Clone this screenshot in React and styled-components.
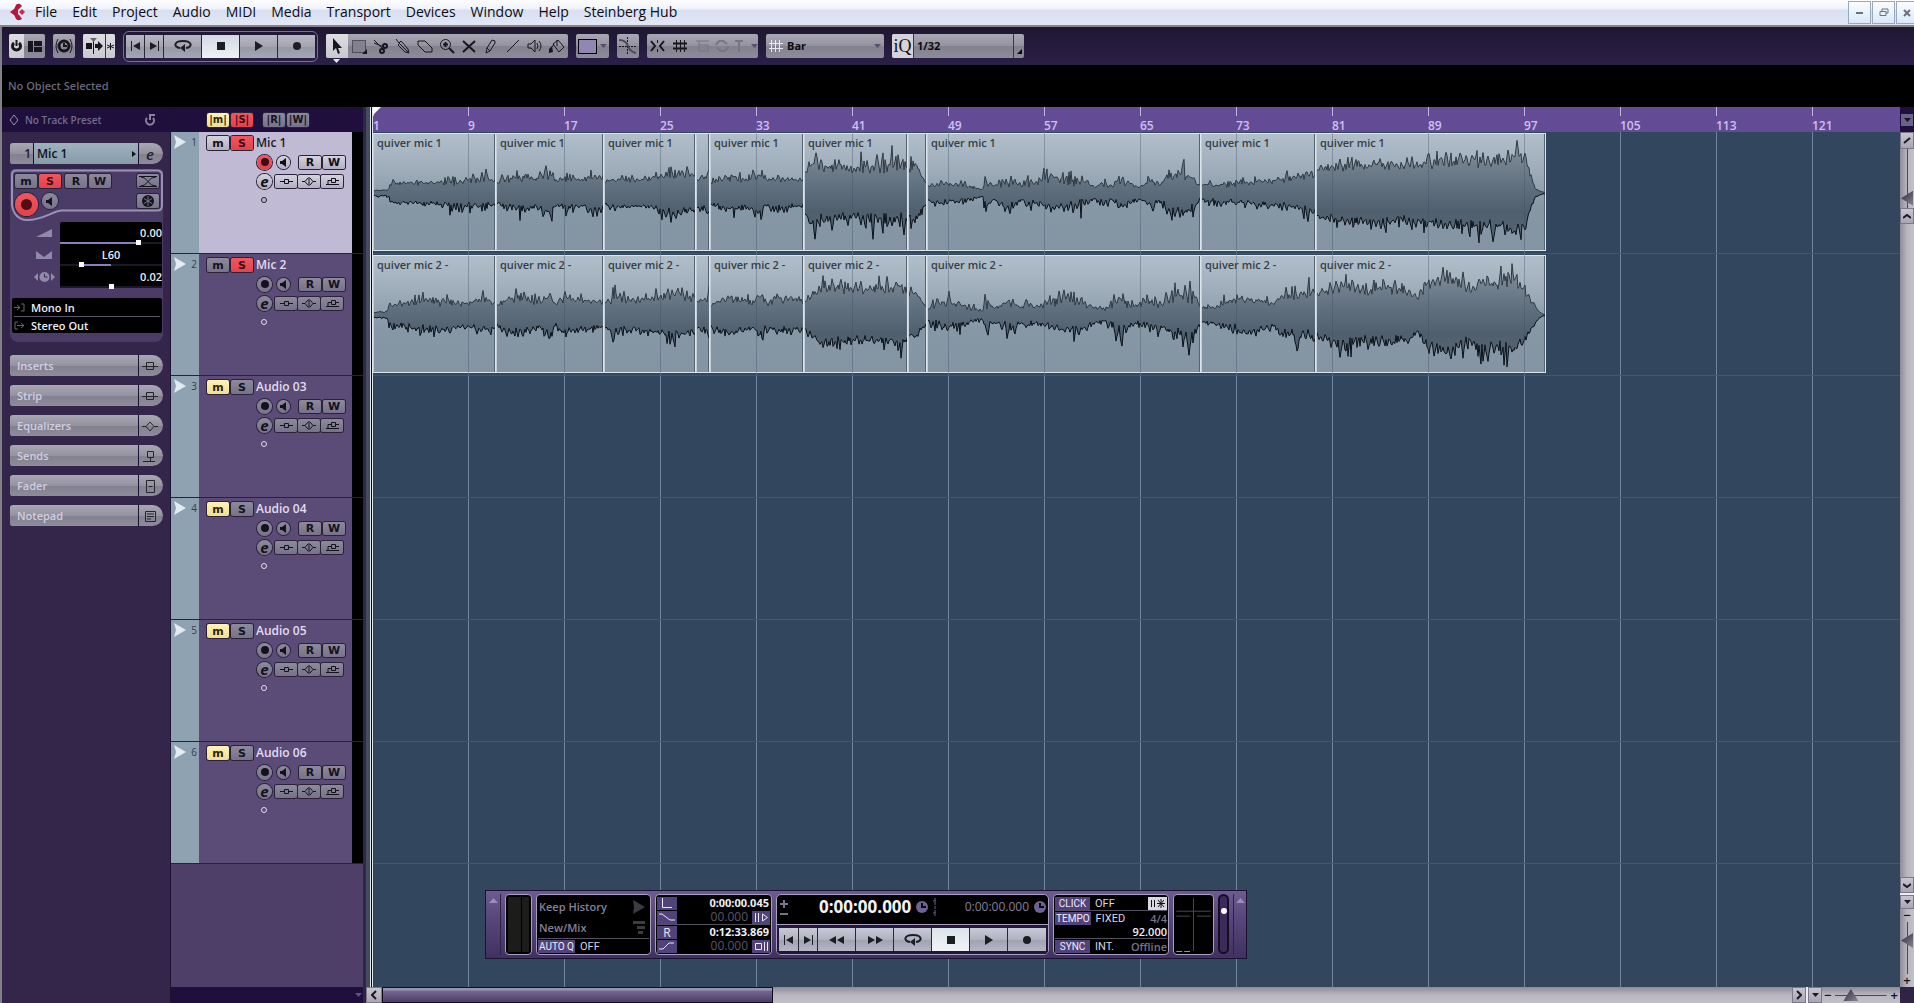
import React from 'react'
import styled, { createGlobalStyle, css } from 'styled-components'

const GlobalStyle = createGlobalStyle`
    * {
        box-sizing: border-box;
    }
    body {
        margin: 0;
        overflow: hidden;
        background: #2f2444;
        font-family: 'Open Sans', 'Noto Sans', sans-serif;
    }
    button, select, input {
        font-family: inherit;
        margin: 0;
        padding: 0;
        border: 0;
        border-radius: 0;
    }
`

/* ---------- icons ---------- */

const line = { fill: 'none', stroke: 'currentColor' }

const ICONS = {
    logo: [16, 18, <>
        <path d="M10 1C5 0 6 4 4 6L0 9l4 3c2 2 1 6 6 5l2-1-2-3-2-2V7l2-2 2-2z" fill="#b3173a" />
        <path d="m12 6 3 3-3 3-3-3z" fill="#c2304c" />
    </>],
    power: [11, 12, <>
        <path d="M3 3a4 4 0 1 0 5 0" {...line} strokeWidth="3" />
        <path d="M5.500 0v6" {...line} strokeWidth="2" />
    </>],
    layout: [14, 11, <path d="M0 0h5v11H0zM6 0h8v5H6zM6 6h8v5H6z" />],
    delay: [18, 16, <>
        <circle cx="9" cy="8" r="5" {...line} strokeWidth="3" />
        <path d="M9 5v3h3" {...line} strokeWidth="2" />
        <path d="M3 1q-4 7 0 14M15 1q4 7 0 14" {...line} strokeWidth="1" />
    </>],
    autoScroll: [17, 16, <>
        <path d="M0 5h6v6H0zM9 6h3V3l5 5-5 5v-3H9z" />
        <path d="M7.500 3v13" {...line} />
        <path d="M4 0h7L7.500 4z" fill="#666" />
    </>],
    star: [7, 7, <path d="M3.500 0v7M0 2l7 3M7 2 0 5" {...line} />],
    toStart: [11, 10, <><path d="M1.500 0v10" {...line} /><path d="M10 1v8L3 5z" /></>],
    toEnd: [11, 10, <><path d="M9.500 0v10" {...line} /><path d="M1 1v8l7-4z" /></>],
    cycle: [18, 12, <>
        <path d="M6 8C-1 7 0 1 9 1s10 6 3 7" {...line} strokeWidth="2" />
        <path d="m11 4 0 8-5-4z" />
    </>],
    stop: [10, 10, <path d="M1 1h8v8H1z" />],
    play: [10, 10, <path d="M1 0v10l8-5z" />],
    record: [10, 10, <circle cx="5" cy="5" r="4" />],
    rewind: [18, 10, <path d="M8 1v8L1 5zM16 1v8L9 5z" />],
    forward: [18, 10, <path d="M2 1v8l7-4zM10 1v8l7-4z" />],
    arrow: [10, 17, <path d="M1 0v13l3-3 2 6 2-1-2-5h4z" />],
    range: [16, 15, <>
        <path d="M1.500 1.500h13v12h-13z" fill="#83818d" stroke="currentColor" strokeDasharray="1 1" />
        <path d="M16 10v5h-5z" />
    </>],
    scissors: [16, 15, <>
        <path d="M1 1l9 9M1 4l10 4" {...line} />
        <circle cx="12" cy="7" r="2" {...line} strokeWidth="2" />
        <circle cx="9" cy="12" r="2" {...line} strokeWidth="2" />
    </>],
    glue: [16, 16, <path d="M1 1l3 4 2-2 7 8 1 4-4-1-7-7 2-2M5 6l8 8" {...line} />],
    eraser: [16, 13, <path d="M1 1h7l7 7v4H8L1 5zM1 5l7 7" {...line} />],
    zoom: [16, 16, <>
        <circle cx="6.500" cy="6.500" r="5" {...line} />
        <path d="M4 6.500h5M6.500 4v5M10 10l5 5" {...line} strokeWidth="2" />
    </>],
    mute: [14, 13, <path d="M1 1l12 11M13 1 1 12" {...line} strokeWidth="2" />],
    pencil: [12, 15, <path d="M1 14l1-5 5-8 3 1 0 2-5 8zM2 9l3 3" {...line} />],
    line: [14, 14, <path d="M1 13 13 1" {...line} />],
    speaker: [16, 14, <path d="M1 5h3l4-4v12L4 9H1zM10 4q2 3 0 6M12 2q4 5 0 10" {...line} />],
    paint: [16, 15, <><path d="M4 5l5-4 6 7-5 5zM8 7V1M5 5l-2 3" {...line} /><path d="M0 10l3-3 1 6-4 1z" /></>],
    crossfade: [20, 20, <>
        <path d="M9.500 1v18M1 10.500h18" {...line} strokeDasharray="2 1" stroke="#16161c" />
        <path d="M1 4q7 0 9 6t8 7" {...line} stroke="#4c4956" strokeWidth="2" />
    </>],
    snap: [15, 12, <>
        <path d="M1 1l4 5-4 5M14 1l-4 5 4 5" {...line} strokeWidth="2" />
        <path d="M7.500 0v3M7.500 9v3" {...line} />
    </>],
    grid: [14, 12, <path d="M2.500 0v12M6.500 0v12M10.500 0v12M0 3.500h14M0 8.500h14" {...line} strokeWidth="1" />],
    gridHeavy: [14, 12, <>
        <path d="M3.500 0v12M7.500 0v12M11.500 0v12" {...line} />
        <path d="M0 3.500h14M0 8.500h14" {...line} strokeWidth="2" />
    </>],
    events: [13, 12, <path d="M0 1h13M3 5h9v6H3zM3 5V1" {...line} />],
    loop: [14, 12, <path d="M1 5q2-5 7-4l4 3M13 7q-2 5-7 4L2 8" {...line} strokeWidth="2" />],
    tee: [16, 12, <path d="M3 1h8M7 1v11" {...line} strokeWidth="2" />],
    drop: [7, 4, <path d="M0 0h7L3.500 4z" />],
    corner: [5, 5, <path d="M5 0v5H0z" />],
    diamond: [10, 12, <path d="M5 1l4 5-4 5-4-5z" {...line} stroke="#9a94aa" />],
    reset: [11, 12, <path d="M2 4a4 4 0 1 0 6 0M5 6V1h5" {...line} stroke="#8a839c" strokeWidth="2" />],
    right: [4, 6, <path d="M0 0l4 3-4 3z" />],
    head: [12, 14, <path d="M0 0 12 7 0 14 2 7z" />],
    fade: [18, 11, <path d="M2 1q4 0 7 4.500T17 10M2 10q4 0 7-4.500T17 1M0 .5h18M0 10.500h18" {...line} />],
    freeze: [14, 14, <>
        <circle cx="7" cy="7" r="6" />
        <path d="M7 2v10M3 4.500l8 5M11 4.500l-8 5" stroke="#77738a" />
    </>],
    monitor: [8, 9, <path d="M0 3h2l4-3v9L2 6H0z" />],
    volume: [16, 8, <path d="M0 8 16 0v8z" />],
    pan: [16, 8, <path d="M0 0l8 6 8-6v8H0z" />],
    shift: [21, 10, <>
        <path d="M0 5l4-4v8zM21 5l-4-4v8z" />
        <circle cx="10.500" cy="5" r="5" />
        <path d="M10.500 2v3h3" fill="none" stroke="#33264a" />
    </>],
    input: [11, 9, <path d="M0 4.500h6M3 2l3 2.500L3 7M7 1h3v7H7" {...line} />],
    output: [11, 9, <path d="M4 1H1v7h3M3 4.500h7M7 2l3 2.500L7 7" {...line} />],
    insert: [16, 10, <path d="M0 5.500h16M4.500 1.500h7v7h-7z" {...line} />],
    eq: [16, 10, <path d="M0 5.500h4M12 5.500h4M8 1l4 4.500L8 10 4 5.500z" {...line} />],
    send: [14, 12, <path d="M4.500 1.500h6v6h-6zM7.500 7v4M0 11.500h12" {...line} />],
    fader: [10, 14, <path d="M1.500 1.500h8v12h-8zM3.500 7.500h4" {...line} />],
    note: [12, 12, <path d="M1.500 1.500h10v10h-10zM3 4h7M3 6.500h7M3 9h4" {...line} />],
    stateInsert: [13, 7, <path d="M0 3.500h4M9 3.500h4M4.500 1.500h4v4h-4z" {...line} />],
    stateEq: [14, 9, <path d="M0 4.500h3M11 4.500h3M7 0v9M6 1 3 4.500 6 8M8 1l3 3.500L8 8" {...line} />],
    stateSend: [13, 8, <path d="M0 7.500h13M2 7V3.500h3M5.500 1.500h4v4h-4zM10 3.500h3" {...line} />],
    up: [9, 5, <path d="M0 5h9L4.500 0z" />],
    history: [12, 14, <path d="M0 0l12 7-12 7 1-7z" />],
    mix: [12, 13, <path d="M0 0h12v3H0zM4 5h8v3H4zM5 10h5v3H5z" />],
    left: [13, 11, <path d="M1.500 0v9.500H11" {...line} strokeWidth="1" />],
    preroll: [16, 8, <path d="M0 1h3l8 6h5" {...line} />],
    postroll: [16, 8, <path d="M0 7h4l6-6h5" {...line} />],
    punchIn: [15, 9, <path d="M1.500 0v9M4.500 0v9M8.500 1v7l5-3.500z" {...line} />],
    punchOut: [15, 9, <path d="M1.500 1.500h6v6h-6zM10.500 0v9M13.500 0v9" {...line} />],
    plusMinus: [8, 17, <path d="M0 4h8M4 0v8M0 14h8" {...line} strokeWidth="2" />],
    clock: [12, 12, <><circle cx="6" cy="6" r="6" /><path d="M6 2v4h4" fill="none" stroke="#08060c" strokeWidth="2" /></>],
    link: [4, 18, <path d="M2 0v18M0 3h4M0 15h4" {...line} strokeDasharray="3 1" />],
    precount: [15, 9, <path d="M1.500 1v7M4.500 1v7M7 4.500h8M11 0v9M8 1l6 7M14 1 8 8" {...line} />],
    min: [7, 2, <path d="M0 0h7v2H0z" />],
    restore: [10, 9, <path d="M3 3V1h6v4H7M1 3.500h6v4H1z" {...line} />],
    close: [9, 8, <path d="M1 1l6 6M7 1 1 7" {...line} strokeWidth="2" />],
    chevLeft: [6, 10, <path d="M5 1 1 5l4 4" {...line} strokeWidth="2" />],
    chevRight: [6, 10, <path d="M1 1l4 4-4 4" {...line} strokeWidth="2" />],
    chevUp: [8, 5, <path d="M0 4l4-3 4 3" {...line} strokeWidth="2" />],
    chevDown: [8, 5, <path d="M0 1l4 3 4-3" {...line} strokeWidth="2" />],
    slash: [8, 7, <path d="M1 6 7 1" {...line} strokeWidth="2" />],
}

const Svg = styled.svg`
    display: block;
    flex: none;
    fill: currentColor;
`

const Icon = ({ name }) => {
    const [w, h, body] = ICONS[name]
    return <Svg width={w} height={h} viewBox={`0 0 ${w} ${h}`} aria-hidden="true">{body}</Svg>
}

/* ---------- shell ---------- */

const Shell = styled.div`
    display: flex;
    flex-direction: column;
    height: 100vh;
    background: #2f2444;
`

const Menu = styled.nav`
    display: flex;
    align-items: center;
    gap: 15px;
    height: 27px;
    padding: 0 0 1px 10px;
    color: #0c0c14;
    background: linear-gradient(#fdfdff 0, #f1f3fa 9px, #d9dff0 10px, #e2e7f6 24px);
    border-bottom: 2px solid #85858c;
`

const MenuLink = styled.a`
    font-size: 14px;
    line-height: 20px;
    color: inherit;
    text-decoration: none;
    white-space: nowrap;
`

const LogoBox = styled.span`
    margin-right: -6px;
`

const WindowButtons = styled.div`
    display: flex;
    gap: 1px;
    margin-left: auto;
    align-self: stretch;
    padding-top: 1px;
    margin-right: -5px;
`

const WindowButton = styled.button`
    display: grid;
    place-items: center;
    width: 23px;
    color: #6c7078;
    background: linear-gradient(#fafdff, #dbe9f7);
    border: 1px solid #98a9bd;
`

const Frame = styled.div`
    display: flex;
    flex-direction: column;
    flex: 1;
    min-height: 0;
    border-left: 2px solid #808085;
`

const Toolbar = styled.header`
    display: flex;
    align-items: center;
    gap: 8px;
    height: 38px;
    padding: 0 7px;
    background: linear-gradient(#1f1730, #2b1f49);
`

const metal = css`
    background: linear-gradient(#a9a7b4 0, #94929f 50%, #83818f 52%, #8e8c9a 100%);
`

const Group = styled.div`
    display: flex;
    align-items: stretch;
    height: 24px;
    border-radius: 2px;
    overflow: hidden;
    ${metal}
`

const Tool = styled.button`
    display: flex;
    align-items: center;
    justify-content: center;
    gap: 3px;
    width: ${props => props.$w || 22}px;
    color: ${props => props.$dim ? '#77757f' : '#16161c'};
    background: ${props => props.$on ? 'linear-gradient(#dddde2, #c8c8d0)' : 'transparent'};
    border-left: ${props => props.$split ? '1px solid #3a3846' : '0'};
`

const ToolMark = styled.span`
    position: absolute;
    left: 7px;
    top: 25px;
    color: #e6e4ee;
`

const ToolsWrap = styled.div`
    position: relative;
`

const TransportGroup = styled.div`
    display: flex;
    height: 31px;
    padding: 3px 2px;
    border: 1px solid #77718c;
    border-radius: 6px;
`

const TransportButton = styled.button`
    display: grid;
    place-items: center;
    width: ${props => props.$w}px;
    color: #1d1d24;
    background: ${props => props.$on
        ? 'linear-gradient(#d3d9e2, #eef2f6)'
        : 'linear-gradient(#b7b7c2 0, #a5a5b1 50%, #9698a6 52%, #a3a6b4 100%)'};
    border-right: 1px solid #2a2636;
    &:last-child {
        border-right: 0;
    }
`

const Swatch = styled.span`
    width: 19px;
    height: 15px;
    background: #9186b4;
    border: 1px solid #000;
`

const Combo = styled.label`
    display: flex;
    align-items: center;
    gap: 4px;
    width: ${props => props.$w}px;
    padding: 0 3px;
    color: #e8e8f4;
`

const ComboSelect = styled.select`
    appearance: none;
    flex: 1;
    min-width: 0;
    font-size: 11px;
    font-weight: 700;
    line-height: 20px;
    color: #0a0a10;
    background: transparent;
`

const ComboArrow = styled.span`
    color: #55506e;
`

const Quantize = styled.span`
    width: 22px;
    flex: none;
    font-family: 'Liberation Serif', serif;
    font-size: 18px;
    line-height: 24px;
    text-align: center;
    color: #111;
    background: #d3d3d9;
    border-right: 1px solid #3a3846;
`

const QuantizeCorner = styled.span`
    display: flex;
    align-items: flex-end;
    justify-content: center;
    width: 11px;
    padding-bottom: 4px;
    color: #000;
    border-left: 1px solid #3a3846;
`

const InfoLine = styled.div`
    height: 42px;
    padding: 0 6px;
    font-size: 11px;
    font-weight: 600;
    line-height: 42px;
    color: #6b667c;
    background: #000;
`

const Main = styled.main`
    display: grid;
    grid-template-columns: 169px 192px minmax(0, 1fr) 14px;
    flex: 1;
    min-height: 0;
`

/* ---------- inspector ---------- */

const Inspector = styled.aside`
    display: flex;
    flex-direction: column;
    background: #33264a;
    border-right: 1px solid #1b1130;
`

const PresetBar = styled.div`
    display: flex;
    align-items: center;
    gap: 6px;
    height: 25px;
    padding: 0 14px 0 7px;
    font-size: 10px;
    font-weight: 600;
    color: #746c8b;
    background: #1e0f3c;
    span {
        flex: 1;
    }
`

const Stack = styled.div`
    display: flex;
    flex-direction: column;
    padding: 11px 7px 0 8px;
`

const Pill = styled.div`
    display: flex;
    height: 21px;
    border-radius: 3px 11px 11px 3px;
    overflow: hidden;
    ${metal}
`

const TrackNumber = styled.span`
    width: 24px;
    padding-right: 2px;
    font-size: 12px;
    font-weight: 600;
    line-height: 21px;
    text-align: right;
    color: #1d1a26;
    border-right: 1px solid #1b1130;
`

const TrackTitle = styled.button`
    display: flex;
    flex: 1;
    align-items: center;
    justify-content: space-between;
    padding: 0 2px 0 3px;
    font-size: 12px;
    font-weight: 600;
    color: #101018;
    background: linear-gradient(#9fb3be, #869aa8);
`

const PillEnd = styled.button`
    display: grid;
    place-items: center;
    width: 25px;
    padding-right: 2px;
    font-size: 15px;
    font-weight: 600;
    font-style: italic;
    line-height: 20px;
    color: #26232e;
    background: transparent;
    border-left: 1px solid #1b1130;
`

const SectionButton = styled.button`
    flex: 1;
    padding-left: 7px;
    font-size: 11px;
    font-weight: 600;
    text-align: left;
    color: #d2cde2;
    background: transparent;
`

const Sections = styled.div`
    display: flex;
    flex-direction: column;
    gap: 9px;
    margin-top: 13px;
`

const Panel = styled.div`
    margin-top: 5px;
    padding-bottom: 9px;
    background: #4a3c66;
    border-radius: 4px 4px 8px 8px;
`

const PanelTop = styled.div`
    position: relative;
    display: grid;
    grid-template-columns: 1fr auto;
    height: 53px;
    padding: 5px 4px 0 5px;
`

const Outline = styled.svg`
    position: absolute;
    left: 0;
    top: 0;
`

const PanelKeys = styled.div`
    position: relative;
    display: flex;
    flex-direction: column;
    gap: 5px;
`

const PanelRow = styled.div`
    display: flex;
    align-items: flex-start;
    gap: ${props => props.$gap}px;
`

const PanelSide = styled.div`
    position: relative;
    display: flex;
    flex-direction: column;
    gap: 6px;
`

// [top, bottom, glyph]
const TONES = {
    on: ['#f2555c', '#e0434c', '#3b0d14'],
    mute: ['#fdf3b4', '#efdf93', '#2c2710'],
    dark: ['#8d8a9c', '#75728a', '#14121c'],
    light: ['#d5d3df', '#b1aec2', '#101014'],
}

const Key = styled.button`
    display: grid;
    place-items: center;
    flex: none;
    width: 22px;
    height: ${props => props.$short ? 13 : 14}px;
    font-family: 'DejaVu Sans', sans-serif;
    font-size: ${props => props.$small ? 10 : 11}px;
    font-weight: 700;
    line-height: 11px;
    color: ${props => TONES[props.$tone][2]};
    background: linear-gradient(${props => TONES[props.$tone][0]}, ${props => TONES[props.$tone][1]});
    border-radius: 2px;
    box-shadow: 0 0 0 1px #2b2238;
`

const Round = styled.button`
    display: grid;
    place-items: center;
    flex: none;
    width: ${props => props.$size}px;
    height: ${props => props.$size}px;
    font-size: 15px;
    font-style: italic;
    font-weight: 700;
    line-height: 12px;
    color: ${props => TONES[props.$tone][2]};
    background: linear-gradient(${props => TONES[props.$tone][0]}, ${props => TONES[props.$tone][1]});
    border-radius: 50%;
    box-shadow: 0 0 0 1px #2b2238;
`

const BigDot = styled.span`
    width: 11px;
    height: 11px;
    background: #4d1018;
    border-radius: 50%;
`

const Faders = styled.div`
    display: grid;
    grid-template-columns: 50px 1fr;
    padding-right: 1px;
`

const FaderIcons = styled.div`
    display: grid;
    grid-template-rows: repeat(3, 22px);
    place-items: center;
    padding-left: 18px;
    color: #9089a8;
`

const FaderBox = styled.div`
    display: grid;
    grid-template-rows: repeat(3, 22px);
    background: #000;
    border-radius: 2px;
`

const FaderRow = styled.label`
    display: flex;
    flex-direction: column;
    font-size: 11px;
    font-weight: 600;
    line-height: 15px;
    padding-top: 3px;
    color: #ececf2;
    text-align: ${props => props.$align || 'right'};
`

const FaderInput = styled.input`
    appearance: none;
    display: block;
    width: 100%;
    height: 5px;
    background: linear-gradient(to right,
        #1b1924 ${props => props.$from}%, #8a80bd ${props => props.$from}%,
        #8a80bd ${props => props.$to}%, #1b1924 ${props => props.$to}%) center / 100% 2px no-repeat;
    &::-webkit-slider-thumb {
        appearance: none;
        width: 5px;
        height: 5px;
        background: #fff;
    }
`

const Routing = styled.div`
    margin: 10px 1px 0 2px;
    padding: 1px 2px 0 2px;
    background: #000;
    border-radius: 2px;
`

const Route = styled.button`
    display: flex;
    align-items: center;
    gap: 6px;
    width: 100%;
    height: 17px;
    font-size: 11px;
    font-weight: 600;
    color: #ececf2;
    background: transparent;
    border-top: ${props => props.$line ? '1px solid #5b566c' : '0'};
    svg {
        color: #666277;
    }
`

/* ---------- track list ---------- */

const TrackList = styled.section`
    display: flex;
    flex-direction: column;
    min-height: 0;
    background: #4e3f69;
`

const ListHead = styled.div`
    display: flex;
    align-items: center;
    gap: 2px;
    height: 25px;
    padding-left: 36px;
    background: #1e0f3c;
`

const HeadGap = styled.span`
    width: 6px;
`

const ListFoot = styled.div`
    display: flex;
    align-items: center;
    justify-content: flex-end;
    height: 16px;
    margin-top: auto;
    padding-right: 1px;
    color: #5d5380;
    background: #1e0f3c;
`

const Track = styled.article`
    display: grid;
    grid-template-columns: 28px 1fr 11px;
    height: 122px;
    color: ${props => props.$selected ? '#1b1924' : '#e2ddf0'};
    background: ${props => props.$selected ? '#c1bad5' : '#5a4c77'};
    border-bottom: 1px solid #2a2338;
`

const TrackHandle = styled.div`
    display: flex;
    justify-content: space-between;
    padding: 3px 2px 0 3px;
    font-size: 10px;
    line-height: 14px;
    color: #33404c;
    background: #8fa2b2;
    svg {
        color: #e3eaf0;
    }
`

const TrackMeter = styled.div`
    background: #000;
`

const TrackBody = styled.div`
    display: flex;
    flex-direction: column;
    gap: 5px;
    padding: 4px 0 0 8px;
`

const TrackRow = styled.div`
    display: flex;
    align-items: center;
    gap: ${props => props.$gap || 2}px;
    height: 14px;
    padding-left: ${props => props.$indent || 0}px;
`

const TrackName = styled.h2`
    margin: 0 0 0 1px;
    font-size: 12px;
    font-weight: 600;
    line-height: 16px;
`

const Spacer = styled.span`
    width: ${props => props.$w}px;
`

const Ring = styled.span`
    width: 6px;
    height: 6px;
    border: 1px solid currentColor;
    border-radius: 50%;
`

/* ---------- arranger ---------- */

const Arranger = styled.section`
    display: flex;
    flex-direction: column;
    min-width: 0;
    min-height: 0;
`

const ArrangerTop = styled.div`
    display: flex;
    flex: 1;
    min-height: 0;
`

const Divider = styled.div`
    width: 9px;
    background: linear-gradient(to right, #2f2648 3px, #454c5e 3px, #454c5e 7px, #dfe6ec 7px, #dfe6ec 8px, #0a0d12 8px);
`

const Canvas = styled.div`
    position: relative;
    display: flex;
    flex-direction: column;
    flex: 1;
    min-width: 0;
    border-left: 1px solid #dfe6ec;
`

const Ruler = styled.ol`
    position: relative;
    display: flex;
    flex: none;
    height: 25px;
    margin: 0;
    padding: 0;
    list-style: none;
    background: #644b96;
`

const Tick = styled.li`
    display: flex;
    flex-direction: column;
    justify-content: space-between;
    flex: 0 0 96px;
    font-size: 12px;
    font-weight: 600;
    line-height: 12px;
    color: #d0c0f0;
    &::before {
        content: '';
        width: 1px;
        height: 9px;
        background: #c3b5e0;
    }
    &:first-child {
        flex-basis: 95px;
    }
    &:last-child {
        flex: 1 1 0;
    }
`

const Flag = styled.span`
    position: absolute;
    left: 0;
    top: 0;
    width: 8px;
    height: 8px;
    background: #fff;
    clip-path: polygon(0 0, 100% 0, 0 100%);
`

const gridLines = color => css`
    background-image: linear-gradient(to right, ${color} 1px, transparent 1px);
    background-size: 96px 100%;
    background-position: -1px 0;
`

const Lanes = styled.div`
    flex: 1;
    min-height: 0;
    background-color: #32475d;
    ${gridLines('#7186a0')}
`

const Lane = styled.div`
    position: relative;
    display: flex;
    height: 122px;
    padding: 1px 0 2px;
    border-bottom: 1px solid #43586e;
    &::after {
        content: '';
        position: absolute;
        inset: 0;
        width: ${props => props.$len || 0}px;
        pointer-events: none;
        ${gridLines('rgba(60, 75, 92, 0.35)')}
    }
`

const Clip = styled.div`
    position: relative;
    flex: none;
    overflow: hidden;
    background: linear-gradient(#b1bfcb, #9fadba 30%, #8697a6 62%, #8494a3);
    border: 1px solid #dce5ec;
    border-left-color: #c3ced8;
    box-shadow: inset -1px 0 0 #56646f;
`

const ClipName = styled.span`
    position: absolute;
    left: 3px;
    top: 1px;
    font-size: 11px;
    font-weight: 600;
    line-height: 15px;
    white-space: nowrap;
    color: #363e47;
`

const Wave = styled.svg`
    display: block;
`

// small deterministic generator, keeps the wave forms stable between renders
const seeded = seed => () => {
    seed = (seed * 1664525 + 1013904223) % 4294967296
    return seed / 4294967296
}

const levelAt = (points, t) => {
    const i = Math.max(1, points.findIndex(p => p[0] >= t))
    const [a, b] = [points[i - 1], points[i]]
    const k = (t - a[0]) / (b[0] - a[0] || 1)
    return [a[1] + (b[1] - a[1]) * k, a[2] + (b[2] - a[2]) * k]
}

// alternating peaks and valleys, a few pixels apart
const zigzag = (width, random) => {
    const out = []
    let high = false
    let from = 0.3
    while (out.length <= width) {
        const steps = 1 + Math.floor(random() * 3)
        const to = high ? 0.35 + random() * random() * 0.85 : random() * 0.3
        for (let i = 1; i <= steps; i++) out.push(from + (to - from) * i / steps)
        from = to
        high = !high
    }
    return out
}

const edge = (points, width, random, dir) => {
    const shape = zigzag(width, random)
    const out = []
    for (let x = 0; x <= width; x++) {
        const [floor, peak] = levelAt(points, x / width)
        const level = shape[x] + (random() - 0.5) * 0.15
        out.push(`${x} ${(59 + dir * (floor + (peak - floor) * level * 1.1)).toFixed(1)}`)
    }
    return out
}

function WaveForm({ width, points, seed }) {
    const random = seeded(seed * 7919)
    const top = edge(points, width, random, -1)
    const bottom = edge(points, width, random, 1)
    return (
        <Wave width={width} height="116" viewBox={`0 0 ${width} 116`} aria-hidden="true">
            <defs>
                <linearGradient id={`w${seed}`} gradientUnits="userSpaceOnUse" x1="0" y1="10" x2="0" y2="100">
                    <stop offset="0" stopColor="#84919c" />
                    <stop offset="0.45" stopColor="#627180" />
                    <stop offset="0.75" stopColor="#4f5f6d" />
                    <stop offset="1" stopColor="#566471" />
                </linearGradient>
            </defs>
            <path d={`M${top.join('L')}L${[...bottom].reverse().join('L')}Z`} fill={`url(#w${seed})`} />
            <path d={`M${top.join('L')}`} fill="none" stroke="#2f3942" />
            <path d={`M${bottom.join('L')}`} fill="none" stroke="#0a1118" />
        </Wave>
    )
}

// [width, [[position, floor, peak], ...]]
const MIC_1 = [
    [123, [[0, 2, 4], [0.12, 2, 5], [0.13, 7, 12], [0.2, 8, 14], [0.5, 8, 14], [0.6, 8, 20], [0.7, 8, 20], [0.72, 9, 22], [0.9, 9, 22], [1, 10, 15]]],
    [108, [[0, 9, 16], [0.1, 11, 18], [0.25, 11, 26], [0.35, 11, 17], [0.49, 14, 30], [0.52, 14, 28], [0.54, 11, 15], [0.65, 11, 24], [0.8, 11, 16], [0.88, 12, 28], [1, 13, 24]]],
    [92, [[0, 10, 16], [0.2, 11, 20], [0.45, 11, 16], [0.55, 12, 24], [0.7, 15, 29], [0.85, 14, 28], [1, 13, 24]]],
    [14, [[0, 12, 20], [0.7, 13, 24], [1, 18, 27]]],
    [94, [[0, 9, 16], [0.1, 11, 18], [0.25, 11, 26], [0.35, 11, 17], [0.54, 14, 30], [0.58, 11, 15], [0.7, 11, 24], [0.85, 11, 19], [1, 11, 16]]],
    [104, [[0, 19, 26], [0.07, 24, 38], [0.11, 28, 46], [0.15, 19, 38], [0.35, 19, 38], [0.45, 19, 28], [0.52, 20, 38], [0.75, 19, 42], [1, 21, 40]]],
    [19, [[0, 20, 38], [0.4, 22, 34], [0.7, 14, 20], [1, 7, 9]]],
    [274, [[0, 6, 12], [0.05, 6, 18], [0.08, 6, 12], [0.13, 5, 14], [0.2, 3, 4], [0.21, 8, 32], [0.24, 5, 8], [0.27, 6, 24], [0.31, 8, 28], [0.34, 6, 8], [0.36, 6, 22], [0.4, 7, 18], [0.45, 9, 30], [0.5, 8, 22], [0.56, 7, 26], [0.61, 5, 7], [0.64, 6, 22], [0.67, 5, 9], [0.7, 8, 27], [0.77, 5, 7], [0.81, 7, 22], [0.85, 6, 14], [0.88, 11, 30], [0.93, 14, 33], [0.97, 9, 22], [1, 4, 7]]],
    [115, [[0, 5, 12], [0.3, 6, 15], [0.5, 8, 18], [0.8, 10, 22], [0.9, 12, 28], [1, 14, 24]]],
    [230, [[0, 20, 30], [0.1, 21, 40], [0.3, 22, 40], [0.45, 23, 36], [0.48, 26, 48], [0.5, 24, 36], [0.53, 25, 48], [0.6, 25, 42], [0.7, 25, 48], [0.82, 27, 44], [0.86, 31, 52], [0.91, 27, 46], [0.92, 18, 28], [0.935, 10, 18], [0.95, 3, 5], [0.98, 1, 1], [1, 0, 1]]],
]

const MIC_2 = [
    [123, [[0, 2, 4], [0.11, 2, 5], [0.12, 7, 16], [0.2, 8, 14], [0.35, 9, 26], [0.47, 9, 27], [0.6, 9, 23], [0.75, 9, 16], [0.88, 11, 23], [1, 10, 17]]],
    [108, [[0, 8, 14], [0.12, 12, 26], [0.25, 12, 27], [0.4, 9, 17], [0.49, 14, 32], [0.54, 8, 15], [0.62, 12, 27], [0.8, 11, 21], [1, 10, 16]]],
    [92, [[0, 10, 18], [0.13, 11, 30], [0.3, 11, 24], [0.55, 12, 26], [0.7, 15, 32], [0.85, 14, 28], [1, 12, 24]]],
    [14, [[0, 12, 18], [0.7, 12, 22], [1, 18, 34]]],
    [94, [[0, 8, 14], [0.12, 12, 26], [0.3, 12, 27], [0.45, 9, 17], [0.54, 14, 32], [0.58, 8, 15], [0.7, 12, 26], [1, 11, 18]]],
    [104, [[0, 12, 18], [0.08, 18, 28], [0.15, 22, 38], [0.33, 21, 42], [0.5, 20, 33], [0.75, 20, 39], [0.9, 21, 46], [1, 18, 28]]],
    [19, [[0, 18, 30], [0.4, 18, 28], [0.7, 10, 17], [1, 6, 8]]],
    [274, [[0, 5, 10], [0.06, 6, 26], [0.1, 6, 20], [0.2, 3, 5], [0.21, 6, 24], [0.25, 5, 8], [0.3, 8, 29], [0.34, 6, 9], [0.36, 6, 22], [0.4, 6, 12], [0.5, 10, 28], [0.56, 9, 22], [0.62, 5, 9], [0.65, 4, 10], [0.7, 8, 29], [0.76, 6, 12], [0.81, 7, 24], [0.86, 8, 19], [0.91, 12, 33], [0.94, 10, 35], [0.97, 12, 33], [1, 4, 7]]],
    [115, [[0, 6, 11], [0.12, 6, 12], [0.25, 8, 24], [0.35, 12, 28], [0.5, 10, 22], [0.62, 8, 17], [0.7, 13, 30], [0.85, 14, 38], [1, 16, 34]]],
    [230, [[0, 18, 32], [0.08, 20, 37], [0.12, 22, 48], [0.2, 20, 32], [0.3, 20, 41], [0.4, 20, 34], [0.44, 15, 19], [0.47, 23, 48], [0.5, 25, 40], [0.58, 26, 50], [0.63, 25, 42], [0.67, 19, 32], [0.7, 26, 48], [0.78, 24, 42], [0.81, 26, 50], [0.86, 26, 50], [0.9, 22, 36], [0.93, 12, 22], [0.96, 4, 6], [0.98, 1, 1], [1, 0, 1]]],
]

const ScrollBar = styled.div`
    display: flex;
    align-items: stretch;
    height: 16px;
    margin-left: 3px;
    background: linear-gradient(#8e8b96, #b9b6c0 50%, #c3c0ca);
`

const ScrollButton = styled.button`
    display: grid;
    place-items: center;
    flex: none;
    width: ${props => props.$w || 14}px;
    height: ${props => props.$h || 16}px;
    color: #1c1826;
    background: linear-gradient(#c8c5cf, #a9a6b2);
    border: 1px solid #7c788a;
`

const ScrollTrack = styled.div`
    flex: 1;
`

const ScrollThumb = styled.div`
    width: 27.7%;
    height: 16px;
    background: linear-gradient(#9a92b0 2px, #75698f 3px, #4a3b69);
    border: 1px solid #110b1c;
`

const ScrollEdge = styled.span`
    flex: none;
    width: ${props => props.$row ? 'auto' : '2px'};
    height: ${props => props.$row ? '2px' : 'auto'};
    background: #eeedf3;
`

const ZoomRow = styled.label`
    display: flex;
    align-items: center;
    gap: 4px;
    flex: none;
    width: 78px;
    padding: 0 2px;
    font-size: 13px;
    font-weight: 600;
    line-height: 14px;
    color: #14111c;
`

const ZoomInput = styled.input`
    appearance: none;
    flex: 1;
    min-width: 0;
    height: 14px;
    background: linear-gradient(#4a4658, #4a4658) center / 100% 1px no-repeat;
    &::-webkit-slider-thumb {
        appearance: none;
        width: 15px;
        height: 12px;
        background: linear-gradient(135deg, #2e2a38, #8a8696);
        clip-path: polygon(50% 0, 100% 100%, 0 100%);
    }
`

const SideBar = styled.aside`
    display: flex;
    flex-direction: column;
    min-height: 0;
    background: linear-gradient(to right, #8e8b96, #b9b6c0 50%, #c3c0ca);
`

const SideHead = styled.div`
    display: grid;
    place-items: center;
    flex: none;
    height: 25px;
    background: #1e0f3c;
`

const SideHeadButton = styled.button`
    display: grid;
    place-items: center;
    width: 12px;
    height: 12px;
    color: #16102a;
    background: #6a6288;
`

const SideFill = styled.div`
    flex: 1;
`

const SideFoot = styled.div`
    flex: none;
    height: 16px;
    background: #2f2444;
`

const SideZoom = styled.label`
    display: flex;
    flex-direction: column;
    align-items: center;
    flex: none;
    height: ${props => props.$h}px;
    font-size: 13px;
    font-weight: 600;
    line-height: 13px;
    color: #14111c;
`

const SideInput = styled.input`
    appearance: none;
    writing-mode: vertical-lr;
    flex: 1;
    width: 12px;
    min-height: 0;
    background: linear-gradient(#4a4658, #4a4658) center / 1px 100% no-repeat;
    &::-webkit-slider-thumb {
        appearance: none;
        width: 12px;
        height: 15px;
        background: linear-gradient(135deg, #2e2a38, #8a8696);
        clip-path: polygon(0 50%, 100% 0, 100% 100%);
    }
`

/* ---------- floating transport ---------- */

const Transport = styled.section`
    position: absolute;
    left: 112px;
    bottom: 28px;
    display: flex;
    gap: 4px;
    height: 69px;
    padding: 3px 0;
    background: linear-gradient(#6d5b91, #58477a 40%, #413061);
    border: 1px solid #1b1230;
`

const Handle = styled.div`
    display: flex;
    justify-content: center;
    width: ${props => props.$right ? 13 : 15}px;
    padding-top: 4px;
    color: #9a8dbb;
    border-style: solid;
    border-color: #2f2248;
    border-width: ${props => props.$right ? '0 0 0 1px' : '0 1px 0 0'};
`

const Box = styled.div`
    display: flex;
    flex-direction: column;
    width: ${props => props.$w}px;
    padding: 1px;
    background: #000;
    border: 1px solid #a89fc0;
    border-radius: 4px;
`

const MeterBars = styled.div`
    flex: 1;
    margin: 1px;
    background: linear-gradient(to right, #1c1c1a 13px, #000 13px, #000 14px, #1c1c1a 14px);
`

const HistoryRow = styled.button`
    display: flex;
    align-items: center;
    justify-content: space-between;
    height: 21px;
    padding: 0 4px 0 1px;
    font-size: 11px;
    font-weight: 600;
    color: #84809a;
    background: transparent;
    svg {
        color: #3c3b42;
    }
`

const TagRow = styled.div`
    display: flex;
    align-items: center;
    gap: 5px;
    flex: none;
    height: ${props => props.$h || 15}px;
    margin-top: ${props => props.$push ? 'auto' : '0'};
    font-family: Roboto, sans-serif;
    font-size: 11px;
    line-height: 13px;
    color: #d8d4e6;
    border-top: ${props => props.$line ? '1px solid #55505f' : '0'};
`

const Tag = styled.button`
    min-width: 35px;
    height: 13px;
    padding: 0 1px;
    font-family: inherit;
    font-size: 10px;
    line-height: 13px;
    text-align: center;
    white-space: nowrap;
    color: #f0ecfa;
    background: #51437a;
`

const End = styled.span`
    display: flex;
    margin-left: auto;
    font-family: 'Open Sans', sans-serif;
    font-size: 11px;
    font-weight: 600;
    line-height: 13px;
    color: ${props => props.$color || '#77738a'};
`

const Precount = styled.button`
    display: grid;
    place-items: center;
    width: 19px;
    height: 13px;
    color: #111;
    background: #d9d8e0;
`

const Locator = styled.div`
    display: flex;
    align-items: center;
    height: ${props => props.$line ? 15 : 14}px;
    border-top: ${props => props.$line ? '1px solid #55505f' : '0'};
`

const LocatorKey = styled.button`
    display: grid;
    place-items: center;
    width: ${props => props.$w || 20}px;
    height: 13px;
    font-size: 12px;
    line-height: 13px;
    color: #ece8f6;
    background: #51437a;
`

const LocatorTime = styled.span`
    flex: 1;
    padding-right: ${props => props.$dim ? 4 : 1}px;
    font-family: ${props => props.$dim ? "'Open Sans'" : "'Noto Sans'"}, sans-serif;
    font-size: ${props => props.$dim ? 12 : 11}px;
    font-weight: ${props => props.$dim ? 400 : 700};
    line-height: 14px;
    text-align: right;
    color: ${props => props.$dim ? '#5a5768' : '#f0f0f5'};
`

const Deck = styled.div`
    display: flex;
    flex-direction: column;
    width: 273px;
    background: #000;
    border: 1px solid #a89fc0;
    border-radius: 5px;
    overflow: hidden;
`

const Display = styled.div`
    display: flex;
    align-items: center;
    gap: 5px;
    height: 30px;
    padding: 0 2px 5px 3px;
    color: #6d6293;
    border-bottom: 1px solid #a89fc0;
`

const Nudge = styled.button`
    width: 34px;
    padding-top: 3px;
    color: #77738a;
    background: transparent;
`

const Time = styled.output`
    font-size: ${props => props.$small ? 12 : 17}px;
    font-weight: ${props => props.$small ? 400 : 700};
    line-height: 20px;
    margin-left: ${props => props.$small ? 'auto' : '0'};
    color: ${props => props.$small ? '#85809a' : '#f2f2f8'};
`

const DeckKeys = styled.div`
    display: flex;
    flex: 1;
    padding: 3px 2px;
    background: #22163a;
    button {
        background: linear-gradient(#c9cad6 0, #b1b2c0 50%, #a0a2b1 52%, #b5b7c5 100%);
    }
    button[aria-pressed='true'] {
        background: linear-gradient(#dbe3ea, #f0f4f7);
    }
`

const Slider = styled.input`
    appearance: none;
    writing-mode: vertical-lr;
    width: 11px;
    height: 60px;
    padding: 2px;
    background: #3b2b5b;
    border: 2px solid #150d26;
    border-radius: 6px;
    &::-webkit-slider-thumb {
        appearance: none;
        width: 6px;
        height: 6px;
        background: #fff;
        border-radius: 50%;
    }
`

const MENU = ['File', 'Edit', 'Project', 'Audio', 'MIDI', 'Media', 'Transport', 'Devices', 'Window', 'Help', 'Steinberg Hub']

const TOOLS = [
    ['arrow', 'Select'], ['range', 'Range'], ['scissors', 'Split'], ['glue', 'Glue'], ['eraser', 'Erase'], ['zoom', 'Zoom'],
    ['mute', 'Mute'], ['pencil', 'Draw'], ['line', 'Line'], ['speaker', 'Play'], ['paint', 'Color'],
]

const SECTIONS = [
    ['Inserts', 'insert'], ['Strip', 'insert'], ['Equalizers', 'eq'], ['Sends', 'send'], ['Fader', 'fader'], ['Notepad', 'note'],
]

const TRACKS = [
    { name: 'Mic 1', solo: true, selected: true, clips: MIC_1, label: 'quiver mic 1' },
    { name: 'Mic 2', solo: true, clips: MIC_2, label: 'quiver mic 2 -' },
    { name: 'Audio 03', mute: true },
    { name: 'Audio 04', mute: true },
    { name: 'Audio 05', mute: true },
    { name: 'Audio 06', mute: true },
]

const SHORT_KEYS = [['toStart', 19], ['toEnd', 19], ['cycle', 38], ['stop', 38], ['play', 38], ['record', 37]]
const DECK_KEYS = [['toStart', 20], ['toEnd', 19], ['rewind', 38], ['forward', 38], ['cycle', 38], ['stop', 38], ['play', 38], ['record', 38]]

const TransportKeys = ({ keys }) => keys.map(([name, w]) => (
    <TransportButton key={name} $w={w} $on={name === 'stop'} aria-pressed={name === 'stop'} aria-label={name}>
        <Icon name={name} />
    </TransportButton>
))

function TopBar() {
    return (
        <Toolbar>
            <Group>
                <Tool $w={15} $on aria-label="Activate project"><Icon name="power" /></Tool>
                <Tool $w={21} aria-label="Window layout"><Icon name="layout" /></Tool>
            </Group>
            <Group><Tool aria-label="Constrain delay compensation"><Icon name="delay" /></Tool></Group>
            <Group>
                <Tool $on aria-label="Auto scroll"><Icon name="autoScroll" /></Tool>
                <Tool $w={10} $on $split aria-label="Suspend auto scroll"><Icon name="star" /></Tool>
            </Group>
            <TransportGroup><TransportKeys keys={SHORT_KEYS} /></TransportGroup>
            <ToolsWrap>
                <Group>
                    {TOOLS.map(([icon, label], i) => (
                        <Tool key={icon} $on={i === 0} aria-label={label}><Icon name={icon} /></Tool>
                    ))}
                </Group>
                <ToolMark><Icon name="drop" /></ToolMark>
            </ToolsWrap>
            <Group>
                <Tool $w={33} aria-label="Color menu">
                    <Swatch /><ComboArrow><Icon name="drop" /></ComboArrow>
                </Tool>
            </Group>
            <Group><Tool aria-label="Snap to zero crossing"><Icon name="crossfade" /></Tool></Group>
            <Group>
                <Tool $w={21} aria-label="Snap"><Icon name="snap" /></Tool>
                <Tool $w={24} aria-label="Snap type"><Icon name="gridHeavy" /></Tool>
                <Tool $w={20} $dim aria-label="Events"><Icon name="events" /></Tool>
                <Tool $w={20} $dim aria-label="Shuffle"><Icon name="loop" /></Tool>
                <Tool $w={26} $dim aria-label="Snap menu">
                    <Icon name="tee" /><ComboArrow><Icon name="drop" /></ComboArrow>
                </Tool>
            </Group>
            <Group>
                <Combo $w={118}>
                    <Icon name="grid" />
                    <ComboSelect aria-label="Grid type"><option>Bar</option></ComboSelect>
                    <ComboArrow><Icon name="drop" /></ComboArrow>
                </Combo>
            </Group>
            <Group>
                <Quantize>iQ</Quantize>
                <Combo $w={99}>
                    <ComboSelect aria-label="Quantize"><option>1/32</option></ComboSelect>
                </Combo>
                <QuantizeCorner><Icon name="corner" /></QuantizeCorner>
            </Group>
        </Toolbar>
    )
}

function InspectorPanel() {
    return (
        <Inspector>
            <PresetBar><Icon name="diamond" /><span>No Track Preset</span><Icon name="reset" /></PresetBar>
            <Stack>
                <Pill>
                    <TrackNumber>1</TrackNumber>
                    <TrackTitle>Mic 1<Icon name="right" /></TrackTitle>
                    <PillEnd aria-label="Edit channel">e</PillEnd>
                </Pill>
                <Panel>
                    <PanelTop>
                        <Outline width="153" height="53" viewBox="0 0 153 53" aria-hidden="true">
                            <path
                                d="M6 1.500H147Q152 1.500 152 6V37Q152 41.500 147 41.500H52C42 42 34 51 17 51C8 51 3 44 2 36V6Q2 1.500 6 1.500Z"
                                fill="none" stroke="#9a92b4" strokeWidth="2"
                            />
                        </Outline>
                        <PanelKeys>
                            <PanelRow $gap={2}>
                                <Key $tone="dark">m</Key>
                                <Key $tone="on">S</Key>
                                <Spacer $w={0} />
                                <Key $tone="dark">R</Key>
                                <Key $tone="dark">W</Key>
                            </PanelRow>
                            <PanelRow $gap={4}>
                                <Round $tone="on" $size={23} aria-label="Record enable"><BigDot /></Round>
                                <Round $tone="dark" $size={16} aria-label="Monitor"><Icon name="monitor" /></Round>
                            </PanelRow>
                        </PanelKeys>
                        <PanelSide>
                            <Key $tone="dark" aria-label="Auto fades"><Icon name="fade" /></Key>
                            <Key $tone="dark" aria-label="Freeze"><Icon name="freeze" /></Key>
                        </PanelSide>
                    </PanelTop>
                    <Faders>
                        <FaderIcons><Icon name="volume" /><Icon name="pan" /><Icon name="shift" /></FaderIcons>
                        <FaderBox>
                            <FaderRow>0.00<FaderInput type="range" defaultValue="78" $from={0} $to={78} /></FaderRow>
                            <FaderRow $align="center">L60<FaderInput type="range" defaultValue="20" $from={22} $to={50} /></FaderRow>
                            <FaderRow>0.02<FaderInput type="range" defaultValue="50" $from={0} $to={0} /></FaderRow>
                        </FaderBox>
                    </Faders>
                    <Routing>
                        <Route><Icon name="input" />Mono In</Route>
                        <Route $line><Icon name="output" />Stereo Out</Route>
                    </Routing>
                </Panel>
                <Sections>
                    {SECTIONS.map(([label, icon]) => (
                        <Pill key={label}>
                            <SectionButton>{label}</SectionButton>
                            <PillEnd aria-label={`${label} bypass`}><Icon name={icon} /></PillEnd>
                        </Pill>
                    ))}
                </Sections>
            </Stack>
        </Inspector>
    )
}

function TrackItem({ number, name, mute, solo, selected }) {
    const tone = selected ? 'light' : 'dark'
    return (
        <Track $selected={selected}>
            <TrackHandle><Icon name="head" />{number}</TrackHandle>
            <TrackBody>
                <TrackRow>
                    <Key $tone={mute ? 'mute' : tone}>m</Key>
                    <Key $tone={solo ? 'on' : tone}>S</Key>
                    <TrackName>{name}</TrackName>
                </TrackRow>
                <TrackRow $indent={50}>
                    <Round $tone={selected ? 'on' : tone} $size={15} aria-label="Record enable"><Icon name="record" /></Round>
                    <Spacer $w={1} />
                    <Round $tone={tone} $size={13} aria-label="Monitor"><Icon name="monitor" /></Round>
                    <Spacer $w={5} />
                    <Key $tone={tone} $short>R</Key>
                    <Key $tone={tone} $short>W</Key>
                </TrackRow>
                <TrackRow $indent={50} $gap={1}>
                    <Round $tone={tone} $size={15} aria-label="Edit channel">e</Round>
                    <Spacer $w={1} />
                    <Key $tone={tone} $short aria-label="Inserts"><Icon name="stateInsert" /></Key>
                    <Key $tone={tone} $short aria-label="Equalizers"><Icon name="stateEq" /></Key>
                    <Key $tone={tone} $short aria-label="Sends"><Icon name="stateSend" /></Key>
                </TrackRow>
                <TrackRow $indent={54}><Ring /></TrackRow>
            </TrackBody>
            <TrackMeter />
        </Track>
    )
}

function TransportPanel() {
    return (
        <Transport>
            <Handle><Icon name="up" /></Handle>
            <Box $w={27}><MeterBars /></Box>
            <Box $w={115}>
                <HistoryRow>Keep History<Icon name="history" /></HistoryRow>
                <HistoryRow>New/Mix<Icon name="mix" /></HistoryRow>
                <TagRow $line $push><Tag>AUTO Q</Tag>OFF</TagRow>
            </Box>
            <Box $w={117}>
                <Locator>
                    <LocatorKey aria-label="Left locator"><Icon name="left" /></LocatorKey>
                    <LocatorTime>0:00:00.045</LocatorTime>
                </Locator>
                <Locator>
                    <LocatorKey aria-label="Pre-roll"><Icon name="preroll" /></LocatorKey>
                    <LocatorTime $dim>00.000</LocatorTime>
                    <LocatorKey $w={18} aria-label="Punch in"><Icon name="punchIn" /></LocatorKey>
                </Locator>
                <Locator $line>
                    <LocatorKey>R</LocatorKey>
                    <LocatorTime>0:12:33.869</LocatorTime>
                </Locator>
                <Locator>
                    <LocatorKey aria-label="Post-roll"><Icon name="postroll" /></LocatorKey>
                    <LocatorTime $dim>00.000</LocatorTime>
                    <LocatorKey $w={18} aria-label="Punch out"><Icon name="punchOut" /></LocatorKey>
                </Locator>
            </Box>
            <Deck>
                <Display>
                    <Nudge aria-label="Nudge position"><Icon name="plusMinus" /></Nudge>
                    <Time>0:00:00.000</Time>
                    <Icon name="clock" />
                    <Icon name="link" />
                    <Time $small>0:00:00.000</Time>
                    <Icon name="clock" />
                </Display>
                <DeckKeys><TransportKeys keys={DECK_KEYS} /></DeckKeys>
            </Deck>
            <Box $w={116}>
                <TagRow $h={14}>
                    <Tag>CLICK</Tag>OFF
                    <End><Precount aria-label="Precount"><Icon name="precount" /></Precount></End>
                </TagRow>
                <TagRow $line><Tag>TEMPO</Tag>FIXED<End>4/4</End></TagRow>
                <TagRow $h={13}><End $color="#f0f0f5">92.000</End></TagRow>
                <TagRow $line $push><Tag>SYNC</Tag>INT.<End>Offline</End></TagRow>
            </Box>
            <Box $w={41}>
                <svg width="37" height="58" viewBox="0 0 37 58" aria-hidden="true">
                    <path d="M18.500 2v54M1 15.500h35M1 20.500h14M22 20.500h14" stroke="#4a4850" />
                    <path d="M1 56.500h6M9 56.500h6" stroke="#5fb8b4" />
                </svg>
            </Box>
            <Slider type="range" defaultValue="22" aria-label="Output level" />
            <Handle $right><Icon name="up" /></Handle>
        </Transport>
    )
}

function ArrangerView() {
    const bars = Array.from({ length: 16 }, (_, i) => i * 8 + 1)
    return (
        <Arranger>
            <ArrangerTop>
                <Divider />
                <Canvas>
                    <Ruler>
                        {bars.map(bar => <Tick key={bar}>{bar}</Tick>)}
                    </Ruler>
                    <Flag />
                    <Lanes>
                        {TRACKS.map((track, row) => (
                            <Lane key={track.name} $len={track.clips ? 1173 : 0}>
                                {track.clips && track.clips.map(([width, points], i) => (
                                    <Clip key={i} style={{ width }}>
                                        {width > 40 && <ClipName>{track.label}</ClipName>}
                                        <WaveForm width={width} points={points} seed={row * 100 + i * 7 + 3} />
                                    </Clip>
                                ))}
                            </Lane>
                        ))}
                    </Lanes>
                    <TransportPanel />
                </Canvas>
            </ArrangerTop>
            <ScrollBar>
                <ScrollButton $w={16} aria-label="Scroll left"><Icon name="chevLeft" /></ScrollButton>
                <ScrollTrack><ScrollThumb /></ScrollTrack>
                <ScrollButton aria-label="Scroll right"><Icon name="chevRight" /></ScrollButton>
                <ScrollEdge />
                <ScrollButton aria-label="Zoom presets"><Icon name="drop" /></ScrollButton>
                <ZoomRow>−<ZoomInput type="range" defaultValue="22" aria-label="Horizontal zoom" />+</ZoomRow>
            </ScrollBar>
        </Arranger>
    )
}

function RightBar() {
    return (
        <SideBar>
            <SideHead><SideHeadButton aria-label="Ruler menu"><Icon name="drop" /></SideHeadButton></SideHead>
            <ScrollButton $h={17} aria-label="Waveform zoom"><Icon name="slash" /></ScrollButton>
            <SideZoom $h={59}>
                <SideInput type="range" defaultValue="95" aria-label="Waveform height" />
            </SideZoom>
            <ScrollButton aria-label="Scroll up"><Icon name="chevUp" /></ScrollButton>
            <SideFill />
            <ScrollButton aria-label="Scroll down"><Icon name="chevDown" /></ScrollButton>
            <ScrollEdge $row />
            <ScrollButton $h={14} aria-label="Track zoom presets"><Icon name="drop" /></ScrollButton>
            <SideZoom $h={78}>
                −<SideInput type="range" defaultValue="30" aria-label="Vertical zoom" />+
            </SideZoom>
            <SideFoot />
        </SideBar>
    )
}

export default function App() {
    return (
        <Shell>
            <GlobalStyle />
            <Menu>
                <LogoBox><Icon name="logo" /></LogoBox>
                {MENU.map(item => <MenuLink key={item} href="#">{item}</MenuLink>)}
                <WindowButtons>
                    <WindowButton aria-label="Minimize"><Icon name="min" /></WindowButton>
                    <WindowButton aria-label="Restore"><Icon name="restore" /></WindowButton>
                    <WindowButton aria-label="Close"><Icon name="close" /></WindowButton>
                </WindowButtons>
            </Menu>
            <Frame>
                <TopBar />
                <InfoLine>No Object Selected</InfoLine>
                <Main>
                    <InspectorPanel />
                    <TrackList>
                        <ListHead>
                            <Key $tone="mute" $small>|m|</Key>
                            <Key $tone="on" $small>|S|</Key>
                            <HeadGap />
                            <Key $tone="dark" $small>|R|</Key>
                            <Key $tone="dark" $small>|W|</Key>
                        </ListHead>
                        {TRACKS.map((track, i) => <TrackItem key={track.name} number={i + 1} {...track} />)}
                        <ListFoot><Icon name="drop" /></ListFoot>
                    </TrackList>
                    <ArrangerView />
                    <RightBar />
                </Main>
            </Frame>
        </Shell>
    )
}
